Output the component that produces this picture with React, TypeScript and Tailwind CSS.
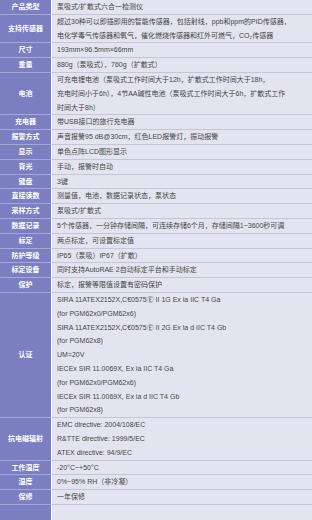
const rows: [string, string[]][] = [
  ['产品类型', ['泵吸式/扩散式六合一检测仪']],
  ['支持传感器', ['超过30种可以即插即用的智能传感器，包括射线，ppb和ppm的PID传感器，', '电化学毒气传感器和氧气，催化燃烧传感器和红外可燃气，CO₂传感器']],
  ['尺寸', ['193mm×96.5mm×66mm']],
  ['重量', ['880g（泵吸式），760g（扩散式）']],
  ['电池', ['可充电锂电池（泵吸式工作时间大于12h，扩散式工作时间大于18h，', '充电时间小于6h），4节AA碱性电池（泵吸式工作时间大于6h，扩散式工作', '时间大于8h）']],
  ['充电器', ['带USB接口的旅行充电器']],
  ['报警方式', ['声音报警95 dB@30cm，红色LED报警灯，振动报警']],
  ['显示', ['单色点阵LCD图形显示']],
  ['背光', ['手动，报警时自动']],
  ['键盘', ['3键']],
  ['直接读数', ['测量值，电池，数据记录状态，泵状态']],
  ['采样方式', ['泵吸式/扩散式']],
  ['数据记录', ['5个传感器，一分钟存储间隔，可连续存储6个月，存储间隔1~3600秒可调']],
  ['标定', ['两点标定，可设置标定值']],
  ['防护等级', ['IP65（泵吸）IP67（扩散）']],
  ['标定设备', ['同时支持AutoRAE 2自动标定平台和手动标定']],
  ['保护', ['标定，报警等限值设置有密码保护']],
  ['认证', [
    'SIRA 11ATEX2152X,C€0575Ⓔ II  1G Ex ia IIC T4 Ga',
    '(for PGM62x0/PGM62x6)',
    'SIRA 11ATEX2152X,C€0575Ⓔ II  2G Ex ia d IIC T4 Gb',
    '(for PGM62x8)',
    'UM=20V',
    'IECEx SIR 11.0069X, Ex ia IIC T4 Ga',
    '(for PGM62x0/PGM62x6)',
    'IECEx SIR 11.0069X, Ex ia d IIC T4 Gb',
    '(for PGM62x8)',
  ]],
  ['抗电磁辐射', ['EMC directive: 2004/108/EC', 'R&TTE directive: 1999/5/EC', 'ATEX directive: 94/9/EC']],
  ['工作温度', ['-20°C~+50°C']],
  ['湿度', ['0%~95% RH（非冷凝）']],
  ['保修', ['一年保修']],
  ['', ['', '']],
];

export default function App() {
  return (
    <div className="w-[312px] h-[520px] overflow-hidden bg-[#e4e4f0] font-['Liberation_Sans','Noto_Sans_CJK_SC',sans-serif]">
      {rows.map(([label, lines], i) => (
        <div key={i} className="flex">
          <div className="w-[51px] shrink-0 flex items-center justify-center bg-[#7b7ec0] border-b border-[#a6a8d8] text-white text-[7px] font-bold leading-[13.8px]">
            {label}
          </div>
          <div className="flex-1 bg-[#e4e4f0] border-l border-white border-b border-b-[#c4c5d8] pl-[5px] text-[#444] text-[7px] leading-[13.8px]">
            {lines.map((l, j) => (
              <div key={j} className="whitespace-nowrap h-[13.8px]">{l}</div>
            ))}
          </div>
        </div>
      ))}
    </div>
  );
}
